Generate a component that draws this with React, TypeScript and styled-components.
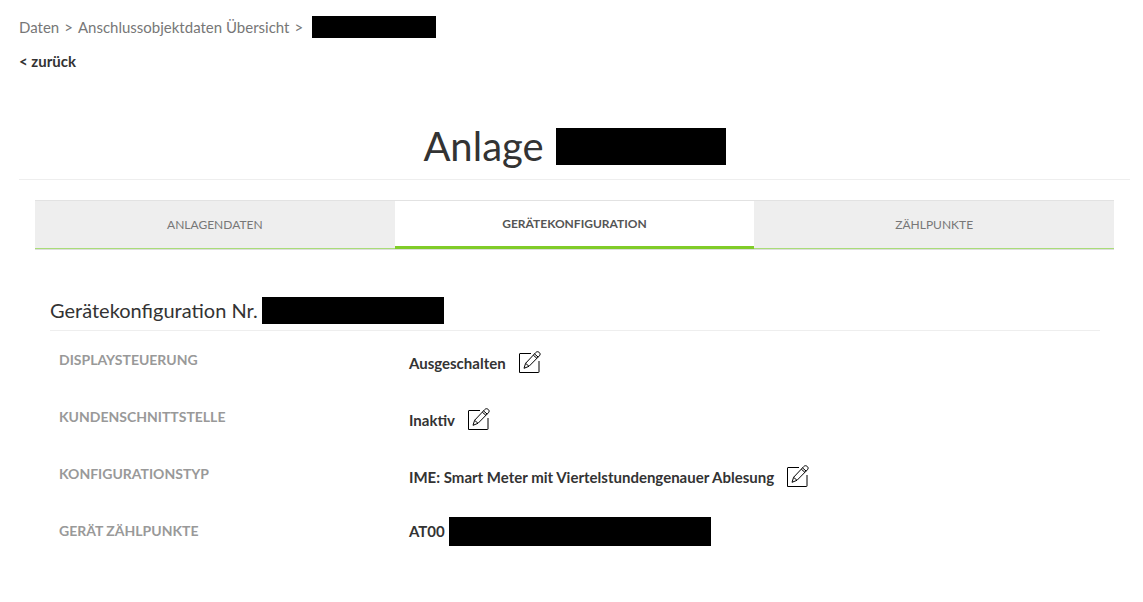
import React from "react";
import styled, { createGlobalStyle } from "styled-components";

const GlobalStyle = createGlobalStyle`
  *, *::before, *::after { box-sizing: border-box; }
  body {
    margin: 0;
    background: #fff;
    color: #333;
    font-family: Lato, "Open Sans", sans-serif;
    font-size: 15px;
    line-height: 22px;
  }
  h1, h2, dl, dt, dd { margin: 0; }
`;

const Page = styled.div`
  padding: 16px 13px 40px 19px;
`;

const Breadcrumb = styled.nav`
  display: flex;
  align-items: center;
  gap: 5px;
  color: #777;
`;

const Crumb = styled.a`
  color: inherit;
  text-decoration: none;
`;

const Redacted = styled.span<{ $width: number; $height: number; $gap?: number }>`
  flex: none;
  width: ${(p) => p.$width}px;
  height: ${(p) => p.$height}px;
  margin-left: ${(p) => p.$gap ?? 4}px;
  background: #000;
`;

const BackLink = styled.a`
  display: inline-block;
  margin-top: 12px;
  color: #333;
  font-weight: 700;
  text-decoration: none;
`;

const Title = styled.h1`
  display: flex;
  justify-content: center;
  align-items: center;
  margin-top: 50px;
  padding-bottom: 9px;
  border-bottom: 1px solid #eee;
  font-size: 40px;
  font-weight: 400;
  line-height: 48px;
`;

const Tabs = styled.div`
  display: grid;
  grid-template-columns: repeat(3, 1fr);
  margin: 20px 16px 0;
  border-top: 1px solid #e2e2e2;
  border-bottom: 1px solid #ddd;
`;

const Tab = styled.button<{ $active?: boolean }>`
  height: 48px;
  padding: 0;
  border: 0;
  border-bottom: ${(p) => (p.$active ? "3px solid #80cc28" : "1px solid #a9dc78")};
  background: ${(p) => (p.$active ? "#fff" : "#eee")};
  color: ${(p) => (p.$active ? "#555" : "#777")};
  font-family: inherit;
  font-size: 12px;
  font-weight: ${(p) => (p.$active ? 700 : 400)};
  text-transform: uppercase;
  cursor: pointer;
`;

const Panel = styled.section`
  padding: 44px 30px 0 31px;
`;

const SectionTitle = styled.h2`
  display: flex;
  align-items: center;
  padding-bottom: 4px;
  border-bottom: 1px solid #eee;
  font-size: 20px;
  font-weight: 400;
  line-height: 32px;
`;

const Details = styled.dl`
  padding: 18px 9px 0;
`;

const Row = styled.div`
  display: grid;
  grid-template-columns: 350px 1fr;
  align-items: start;
  height: 57px;
`;

const Label = styled.dt`
  color: #999;
  font-size: 14px;
  font-weight: 700;
  text-transform: uppercase;
`;

const Value = styled.dd<{ $editable: boolean }>`
  display: flex;
  align-items: center;
  height: ${(p) => (p.$editable ? 28 : 22)}px;
  font-weight: 700;
`;

const EditButton = styled.button`
  width: 24px;
  height: 24px;
  margin-left: 12px;
  padding: 0;
  border: 0;
  background: none;
  color: #000;
  cursor: pointer;

  svg { display: block; }
`;

function EditIcon() {
  return (
    <svg width="24" height="24" viewBox="0 0 24 24" fill="none" stroke="currentColor" aria-hidden="true">
      <path d="M13 2.5H2a.5.5 0 0 0-.5.5v18.500h19a.5.5 0 0 0 .5-.5V10" />
      <path d="M6 17.300l1.600-5L17.700 1.600c1.100-1.200 2.400-1.100 3.500-.2s1.300 2.200.2 3.400L11 15.300l-5 2zM7.600 12.300l3.400 3M16.500 2.900l3.700 3.200M15.300 4.200l3.700 3.200" strokeLinejoin="round" />
    </svg>
  );
}

const rows = [
  { label: "Displaysteuerung", value: "Ausgeschalten", editable: true },
  { label: "Kundenschnittstelle", value: "Inaktiv", editable: true },
  { label: "Konfigurationstyp", value: "IME: Smart Meter mit Viertelstundengenauer Ablesung", editable: true },
  { label: "Gerät Zählpunkte", value: "AT00", editable: false },
];

export default function App() {
  return (
    <>
      <GlobalStyle />
      <Page>
        <Breadcrumb aria-label="Breadcrumb">
          <Crumb href="#daten">Daten</Crumb>
          <span>&gt;</span>
          <Crumb href="#uebersicht">Anschlussobjektdaten Übersicht</Crumb>
          <span>&gt;</span>
          <Redacted $width={124} $height={22} />
        </Breadcrumb>
        <BackLink href="#zurueck">&lt; zurück</BackLink>
        <Title>
          Anlage
          <Redacted $width={170} $height={37} $gap={12} />
        </Title>
        <Tabs role="tablist">
          <Tab type="button" role="tab" aria-selected={false}>Anlagendaten</Tab>
          <Tab type="button" role="tab" aria-selected $active>Gerätekonfiguration</Tab>
          <Tab type="button" role="tab" aria-selected={false}>Zählpunkte</Tab>
        </Tabs>
        <Panel>
          <SectionTitle>
            Gerätekonfiguration Nr.
            <Redacted $width={182} $height={27} />
          </SectionTitle>
          <Details>
            {rows.map((row) => (
              <Row key={row.label}>
                <Label>{row.label}</Label>
                <Value $editable={row.editable}>
                  {row.value}
                  {row.editable ? (
                    <EditButton type="button" aria-label={`${row.label} bearbeiten`}>
                      <EditIcon />
                    </EditButton>
                  ) : (
                    <Redacted $width={262} $height={29} />
                  )}
                </Value>
              </Row>
            ))}
          </Details>
        </Panel>
      </Page>
    </>
  );
}
